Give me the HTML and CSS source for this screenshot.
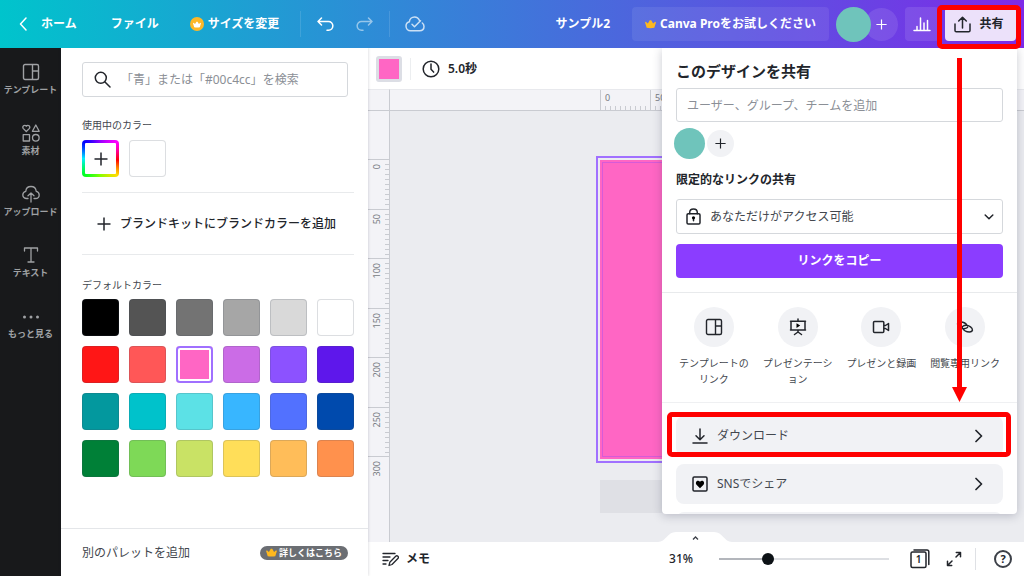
FILE: index.html
```html
<!DOCTYPE html>
<html lang="ja">
<head>
<meta charset="utf-8">
<meta name="viewport" content="width=device-width, initial-scale=1">
<title>サンプル2</title>
<link rel="stylesheet" href="styles.css">
</head>
<body>
<svg class="defs" aria-hidden="true">
  <symbol id="crown" viewBox="0 0 12 10"><path d="M1.800 9.200 0 3.200l.9-.7 2.200 1.900L5.200.8h1.600l2.100 3.600 2.200-1.900.9.7-1.800 6q-4.200.7-8.400 0z"/></symbol>
  <symbol id="layout" viewBox="0 0 18 18"><g fill="none" stroke="currentColor" stroke-width="1.400"><rect x="1.500" y="1.500" width="15" height="15" rx="1.500"/><path d="M10.500 1.500v15M10.500 8h6"/></g></symbol>
  <symbol id="plus" viewBox="0 0 14 14"><path d="M7 .5v13M.5 7h13" fill="none" stroke="currentColor" stroke-width="1.500"/></symbol>
  <symbol id="next" viewBox="0 0 8 14"><path d="m1 1.500 5.500 5.500L1 12.500" fill="none" stroke="currentColor" stroke-width="1.700" stroke-linecap="round" stroke-linejoin="round"/></symbol>
</svg>

<header class="topbar">
  <button class="top-btn home"><svg width="8" height="14" viewBox="0 0 8 14"><path d="M7 1 1.500 7 7 13" class="line"/></svg>ホーム</button>
  <button class="top-btn file">ファイル</button>
  <button class="top-btn resize"><span class="badge"><svg width="8" height="7"><use href="#crown"/></svg></span>サイズを変更</button>
  <span class="top-sep"></span>
  <button class="top-btn undo" aria-label="元に戻す"><svg width="17" height="15" viewBox="0 0 17 15"><path d="M4.500 1 1 4.500 4.500 8M1 4.500h10.500a4.300 4.300 0 0 1 0 8.700H10" class="line"/></svg></button>
  <button class="top-btn redo" aria-label="やり直し"><svg width="17" height="15" viewBox="0 0 17 15"><path d="M12.500 1 16 4.500 12.500 8M16 4.500H5.500a4.300 4.300 0 0 0 0 8.700H7" class="line"/></svg></button>
  <span class="top-sep"></span>
  <button class="top-btn cloud" aria-label="保存済み"><svg width="20" height="16" viewBox="0 0 20 16"><path d="M14.500 4.500C13.500 2.200 11.800 1 9.600 1 6.800 1 4.600 3 4.400 5.800 2.400 6.300 1 7.900 1 10c0 2.700 2 4.700 4.500 4.700h9c2.600 0 4.500-1.700 4.500-4.200 0-1.500-.6-2.700-1.700-3.500M7 8.200l2.500 2.500 6-6" class="line"/></svg></button>
  <span class="doc-name">サンプル2</span>
  <button class="top-btn pro"><svg class="gold" width="11" height="10"><use href="#crown"/></svg>Canva Proをお試しください</button>
  <span class="people"><span class="avatar"></span><button class="top-btn invite" aria-label="メンバーを追加"><svg width="11" height="11"><use href="#plus"/></svg></button></span>
  <button class="top-btn stats" aria-label="分析"><svg width="18" height="17" viewBox="0 0 18 17"><path d="M1 14.500h16M4 14.500v-4M7.500 14.500V2M11 14.500V7M14.500 14.500v-10" class="line"/></svg></button>
  <div class="share-wrap">
    <button class="top-btn share"><svg width="17" height="17" viewBox="0 0 17 17"><path d="M1 8v6.500q0 1.300 1.300 1.300h12.400q1.300 0 1.300-1.300V8M8.500 12V1.300M4.700 5l3.800-3.800L12.300 5" class="line"/></svg>共有</button>
    <span class="mark mark-share"></span>
  </div>
</header>

<div class="body">
  <nav class="rail">
    <a href="#"><svg width="18" height="18"><use href="#layout"/></svg>テンプレート</a>
    <a href="#"><svg width="18" height="18" viewBox="0 0 18 18"><path d="M4.300 7.500 1.400 4.600C-.2 2.800 2.400-.2 4.300 2.200 6.200-.2 8.800 2.800 7.200 4.600zM13.800 1l3.400 6.300h-6.800zM1.200 10.700h6.300V17H1.200z" class="line thin"/><circle cx="13.800" cy="13.800" r="3.300" class="line thin"/></svg>素材</a>
    <a href="#"><svg width="18" height="18" viewBox="0 0 18 18"><path d="M6 13.500H4.600C2.400 13.500.8 12 .8 10s1.300-3.400 3-3.700C4 3.500 6.200 1.500 9 1.500s4.900 2 5.200 4.800c1.800.3 3 1.800 3 3.700 0 2-1.600 3.500-3.800 3.500H12M9 17V8M6 10.800 9 7.900l3 2.900" class="line thin"/></svg>アップロード</a>
    <a href="#"><svg width="18" height="18" viewBox="0 0 18 18"><path d="M2.500 5V2h13v3M9 2v14M6 16h6" class="line thin"/></svg>テキスト</a>
    <a href="#"><svg width="18" height="18" viewBox="0 0 18 18"><g fill="currentColor"><circle cx="2.500" cy="10" r="1.500"/><circle cx="9" cy="10" r="1.500"/><circle cx="15.500" cy="10" r="1.500"/></g></svg>もっと見る</a>
  </nav>

  <aside class="panel">
    <div class="panel-main">
      <label class="search"><svg width="17" height="17" viewBox="0 0 17 17"><circle cx="6.800" cy="6.800" r="5.500" class="line"/><path d="m11 11 5 5" class="line"/></svg><input type="search" aria-label="カラーを検索" placeholder="「青」または「#00c4cc」を検索"></label>
      <h2 class="label">使用中のカラー</h2>
      <div class="swatches">
        <button class="swatch rainbow" aria-label="新しいカラーを追加"><svg width="14" height="14"><use href="#plus"/></svg></button>
        <button class="swatch" aria-label="白"></button>
      </div>
      <button class="brand"><svg width="14" height="14"><use href="#plus"/></svg>ブランドキットにブランドカラーを追加</button>
      <h2 class="label">デフォルトカラー</h2>
      <div class="swatches">
        <button class="swatch" style="background:#000000" aria-label="#000000"></button>
        <button class="swatch" style="background:#545454" aria-label="#545454"></button>
        <button class="swatch" style="background:#737373" aria-label="#737373"></button>
        <button class="swatch" style="background:#a6a6a6" aria-label="#a6a6a6"></button>
        <button class="swatch" style="background:#d9d9d9" aria-label="#d9d9d9"></button>
        <button class="swatch" style="background:#ffffff" aria-label="#ffffff"></button>
        <button class="swatch" style="background:#ff1616" aria-label="#ff1616"></button>
        <button class="swatch" style="background:#ff5757" aria-label="#ff5757"></button>
        <button class="swatch selected" style="background:#ff66c4" aria-label="#ff66c4"></button>
        <button class="swatch" style="background:#cb6ce6" aria-label="#cb6ce6"></button>
        <button class="swatch" style="background:#8c52ff" aria-label="#8c52ff"></button>
        <button class="swatch" style="background:#5e17eb" aria-label="#5e17eb"></button>
        <button class="swatch" style="background:#03989e" aria-label="#03989e"></button>
        <button class="swatch" style="background:#00c2cb" aria-label="#00c2cb"></button>
        <button class="swatch" style="background:#5ce1e6" aria-label="#5ce1e6"></button>
        <button class="swatch" style="background:#38b6ff" aria-label="#38b6ff"></button>
        <button class="swatch" style="background:#5271ff" aria-label="#5271ff"></button>
        <button class="swatch" style="background:#004aad" aria-label="#004aad"></button>
        <button class="swatch" style="background:#008037" aria-label="#008037"></button>
        <button class="swatch" style="background:#7ed957" aria-label="#7ed957"></button>
        <button class="swatch" style="background:#c9e265" aria-label="#c9e265"></button>
        <button class="swatch" style="background:#ffde59" aria-label="#ffde59"></button>
        <button class="swatch" style="background:#ffbd59" aria-label="#ffbd59"></button>
        <button class="swatch" style="background:#ff914d" aria-label="#ff914d"></button>
      </div>
    </div>
    <div class="panel-foot">別のパレットを追加<button class="pill"><svg class="gold" width="11" height="9"><use href="#crown"/></svg>詳しくはこちら</button></div>
  </aside>

  <main class="editor">
    <div class="toolbar">
      <button class="fill" aria-label="背景色"></button>
      <span class="tool-sep"></span>
      <button class="timing"><svg width="18" height="18" viewBox="0 0 18 18"><circle cx="9" cy="9" r="7.800" class="line"/><path d="M9 4v5.300l2.600 2.800" class="line"/></svg>5.0秒</button>
    </div>
    <div class="stage">
      <div class="corner"></div>
      <div class="ruler-x"><div class="marks-x"><span>0</span><span>50</span><span>100</span><span>150</span></div></div>
      <div class="ruler-y"><div class="marks-y"><div><span>0</span></div><div><span>50</span></div><div><span>100</span></div><div><span>150</span></div><div><span>200</span></div><div><span>250</span></div></div><div class="mark-end"><span>300</span></div></div>
      <div class="canvas">
        <div class="sheet"></div>
        <button class="add-page" aria-label="ページを追加"></button>
      </div>
      <button class="drawer" aria-label="ページを表示"><svg width="76" height="11" viewBox="0 0 76 11"><path d="M0 11C8 11 9 1 18 1h38c9 0 10 10 18 10z" fill="#fff"/><path d="m35 8.500 2.500-2.500L40 8.500" fill="none" stroke="#3c4048" stroke-width="1.300"/></svg></button>
    </div>
    <footer class="status">
      <button class="memo"><svg width="17" height="15" viewBox="0 0 17 15"><path d="M1 1.500h12M1 5h7M1 8.500h5M1 12h3M7 13.500l.8-3.200 5.900-6a1.500 1.500 0 0 1 2.200 2.200l-5.900 6z" class="line thin"/></svg>メモ</button>
      <span class="zoom">31%</span>
      <input class="slider" type="range" min="0" max="100" value="27" aria-label="ズーム">
      <button class="icon-btn" aria-label="ページ一覧"><svg width="20" height="20" viewBox="0 0 20 20"><rect x="1" y="3" width="15" height="15.500" rx="1.500" class="line"/><path d="M4 1h13q1.800 0 1.800 1.800V15.500" class="line"/><text x="8.500" y="14" text-anchor="middle" class="count">1</text></svg></button>
      <button class="icon-btn" aria-label="全画面表示"><svg width="16" height="16" viewBox="0 0 16 16"><path d="M10 6 14 2M10.300 1.500h4.200v4.200M6 10l-4 4M1.500 10.300v4.200h4.200" class="line"/></svg></button>
      <span class="status-sep"></span>
      <button class="help" aria-label="ヘルプ">?</button>
    </footer>
  </main>

  <section class="popover" aria-label="共有">
    <div class="pop-top">
      <h1>このデザインを共有</h1>
      <input class="invite-field" type="text" aria-label="共有相手" placeholder="ユーザー、グループ、チームを追加">
      <div class="members"><span class="avatar small"></span><button class="add-member" aria-label="メンバーを追加"><svg width="11" height="11"><use href="#plus"/></svg></button></div>
      <label class="access-label" for="access">限定的なリンクの共有</label>
      <div class="access">
        <svg width="15" height="17" viewBox="0 0 15 17"><rect x="1" y="5.800" width="13" height="10.200" rx="1.200" class="line"/><path d="M3.700 5.800V4.500q0-3.500 3.800-3.500t3.800 3.500v1.300" class="line"/><path d="M7.500 12.800V11" class="line"/><circle cx="7.500" cy="9.800" r="1.600"/></svg>
        <select id="access"><option>あなただけがアクセス可能</option></select>
        <svg width="10" height="6" viewBox="0 0 10 6"><path d="m1.200 1 3.800 3.800L8.800 1" class="line"/></svg>
      </div>
      <button class="copy">リンクをコピー</button>
    </div>
    <div class="actions">
      <button><span class="disc"><svg width="18" height="18"><use href="#layout"/></svg></span>テンプレートのリンク</button>
      <button><span class="disc"><svg width="18" height="18" viewBox="0 0 18 18"><path d="M9 1v2M1.500 3.200h15M2 3.200v8.800h14V3.200M1.500 12h15M9 12v2L5.500 16.500M9 14l3.500 2.500" class="line"/><path d="M7.500 5.300v4.600l3.700-2.300z"/></svg></span>プレゼンテーション</button>
      <button><span class="disc"><svg width="18" height="18" viewBox="0 0 18 18"><path d="M2.500 3.500h8.300q1 0 1 1v9q0 1-1 1H2.500q-1 0-1-1v-9q0-1 1-1zM12 7.500h1.500L16.500 5.500v7L13.500 10.500H12" class="line"/></svg></span>プレゼンと録画</button>
      <button><span class="disc"><svg width="18" height="18" viewBox="0 0 18 18"><path d="M11.500 9.500C9.500 11 6 11 3.500 9.200.5 7 1 4 4.500 4c3 0 6 2 7 4M6.500 8.500c2-1.500 5.500-1.500 8 .3 3 2.200 2.500 5.200-1 5.200-3 0-6-2-7-4" class="line"/></svg></span>閲覧専用リンク</button>
    </div>
    <div class="rows">
      <div class="row-wrap">
        <button class="row"><svg width="16" height="16" viewBox="0 0 16 16"><path d="M8 1v10.500M4 7.800l4 4 4-4M1 15h14" class="line"/></svg><span>ダウンロード</span><svg width="8" height="14"><use href="#next"/></svg></button>
        <span class="mark mark-row"></span>
      </div>
      <button class="row"><svg width="16" height="16" viewBox="0 0 16 16"><rect x="1" y="1" width="14" height="14" rx="1.200" class="line"/><path d="M8 12.300 4.500 8.800C2.500 6 5.800 3.200 8 5.700c2.200-2.500 5.500.3 3.500 3.100z"/></svg><span>SNSでシェア</span><svg width="8" height="14"><use href="#next"/></svg></button>
      <div class="row"></div>
    </div>
    <svg class="arrow" width="15" height="344" viewBox="0 0 15 344"><path d="M5 0h5v329h5l-7.500 15L0 329h5z"/></svg>
  </section>
</div>
</body>
</html>
```

FILE: styles.css
```css
* { box-sizing: border-box; }

body {
  margin: 0;
  min-height: 100vh;
  display: flex;
  flex-direction: column;
  font: 12px/16px "Noto Sans", "Noto Sans CJK JP", sans-serif;
  color: #22252b;
  background: #fff;
}

button, input, select { font: inherit; color: inherit; }
button { padding: 0; border: 0; background: none; cursor: pointer; }
svg { flex: none; display: block; }
.defs { position: absolute; width: 0; height: 0; }
.line { fill: none; stroke: currentColor; stroke-width: 1.5; stroke-linecap: round; stroke-linejoin: round; }
.thin { stroke-width: 1.3; }
.gold { fill: #fdb81e; }

/* Top bar */
.topbar {
  position: relative;
  z-index: 3;
  height: 48px;
  flex: none;
  display: flex;
  align-items: center;
  padding: 0 8px 0 19px;
  color: #fff;
  background: linear-gradient(90deg, #00c4cc, #7d2ae8);
}
.top-btn { display: flex; align-items: center; justify-content: center; font-weight: 700; white-space: nowrap; }
.home { gap: 14px; }
.file { margin-left: 34px; }
.resize { gap: 4px; margin-left: 31px; }
.badge { width: 14px; height: 14px; border-radius: 50%; background: #fdb827; display: grid; place-items: center; fill: #fff; }
.top-sep { width: 1px; height: 26px; margin: 0 15px 0 21px; background: rgba(255, 255, 255, .12); }
.undo { margin-left: 1px; }
.redo { margin-left: 22px; opacity: .5; }
.redo + .top-sep { margin-left: 16px; }
.cloud { opacity: .75; }
.doc-name { margin-left: auto; font-weight: 700; }
.pro { height: 34px; gap: 4px; margin-left: 22px; padding: 0 13px; border-radius: 4px; background: rgba(255, 255, 255, .08); }
.people { display: flex; align-items: center; margin-left: 7px; }
.avatar { position: relative; z-index: 1; width: 35px; height: 35px; border-radius: 50%; background: #6fc4bb; }
.invite { width: 33px; height: 33px; margin-left: -6px; border-radius: 50%; background: rgba(255, 255, 255, .1); }
.stats { width: 34px; height: 34px; margin-left: 7px; border-radius: 4px; background: rgba(255, 255, 255, .1); }
.share-wrap { position: relative; margin-left: 6px; }
.share { width: 71px; height: 34px; gap: 8px; padding-right: 3px; border-radius: 4px; color: #22252b; background: #ece1fa; }

/* Highlight frames and arrow */
.mark { position: absolute; border: 5px solid #f00; border-radius: 5px; pointer-events: none; }
.mark-share { inset: -2px -5px -8px -8px; }
.mark-row { inset: -4px -8px -1px -9px; }
.arrow { position: absolute; top: 10px; right: 50px; fill: #f00; pointer-events: none; }

.body { position: relative; flex: 1; display: flex; }

/* Left rail */
.rail { width: 61px; flex: none; padding-top: 15px; background: #18191b; }
.rail a {
  height: 61px;
  display: flex;
  flex-direction: column;
  align-items: center;
  gap: 3px;
  color: #9fa1a4;
  font-size: 9px;
  line-height: 12px;
  font-weight: 700;
  text-decoration: none;
  white-space: nowrap;
}

/* Colour panel */
.panel { position: relative; z-index: 1; width: 307px; flex: none; display: flex; flex-direction: column; background: #fff; box-shadow: 0 0 3px rgba(20, 24, 40, .2); }
.panel-main { flex: 1; padding: 14px 14px 0 21px; }
.search { display: flex; align-items: center; gap: 10px; height: 35px; margin-right: 6px; padding-left: 11px; border: 1px solid #d5d8dc; border-radius: 3px; }
.search input { flex: 1; min-width: 0; padding: 0; border: 0; outline: 0; background: none; }
::placeholder { color: #8b8f96; opacity: 1; }
.label { margin: 20px 0 7px; font-size: 10px; line-height: 16px; font-weight: 400; color: #43474e; }
.swatches { display: grid; grid-template-columns: repeat(6, 37px); gap: 10px; }
.swatch { height: 37px; border-radius: 4px; border: 1px solid rgba(60, 70, 90, .18); background: #fff border-box; }
.rainbow {
  display: grid;
  place-items: center;
  border: 3px solid transparent;
  background: linear-gradient(#fff, #fff) padding-box, conic-gradient(#90f, #f0f 45deg, #f00 95deg, #fd0 135deg, #8f0 180deg, #0f2 225deg, #0ef 270deg, #00f 315deg, #90f) border-box;
}
.selected { border: 0; box-shadow: inset 0 0 0 2px #a070ff, inset 0 0 0 4px #fff; }
.brand {
  width: 100%;
  height: 63px;
  margin-top: 15px;
  display: flex;
  align-items: center;
  justify-content: center;
  gap: 9px;
  padding-right: 3px;
  font-weight: 500;
  border: solid #e8eaec;
  border-width: 1px 0;
}
.brand + .label { margin-top: 22px; margin-bottom: 6px; }
.panel-foot { height: 48px; display: flex; align-items: center; justify-content: space-between; padding: 0 20px 0 21px; border-top: 1px solid #e4e6e9; color: #43474e; }
.pill { display: flex; align-items: center; gap: 2px; height: 14px; padding: 0 6px; border-radius: 7px; color: #fff; font-size: 9px; line-height: 14px; font-weight: 700; background: #6b6e73; }

/* Editor */
.editor { flex: 1; min-width: 0; display: flex; flex-direction: column; }
.toolbar { height: 41px; display: flex; align-items: center; padding-left: 8px; }
.fill { width: 26px; height: 26px; border: 3px solid #dcdee5; border-radius: 3px; background: #ff66c4; }
.tool-sep { width: 1px; height: 22px; margin: 0 11px 0 8px; background: #eceef0; }
.timing { display: flex; align-items: center; gap: 8px; font-weight: 600; }

.stage { position: relative; flex: 1; display: grid; grid-template: 22px 1fr / 22px 1fr; background: #ebecf0; }
.corner, .ruler-x, .ruler-y { background: #f3f3f7; border: 0 solid #c9cbd1; color: #777b82; font-size: 9px; line-height: 12px; }
.corner { border-width: 1px 1px 1px 0; border-top-color: #e8e9ed; }
.ruler-x { display: flex; justify-content: center; overflow: hidden; padding-right: 4px; border-bottom-width: 1px; border-top: 1px solid #e8e9ed; }
.marks-x { width: 210px; flex: none; display: grid; grid-template-columns: repeat(4, 50px); }
.marks-x span { padding: 2px 4px; border-left: 1px solid #c9cbd1; background: repeating-linear-gradient(90deg, transparent 0 4px, #c9cbd1 4px 5px) 0 100% / 100% 4px no-repeat; }
.ruler-y { display: flex; flex-direction: column; padding-top: 48px; border-right-width: 1px; }
.marks-y { height: 297px; display: grid; grid-template-rows: repeat(6, 1fr); }
.marks-y div { background: repeating-linear-gradient(transparent 0 4px, #c9cbd1 4px 5px) 100% 0 / 4px 100% no-repeat; }
.marks-y div, .mark-end { border-top: 1px solid #c9cbd1; padding: 4px 3px; }
.ruler-y span { display: block; writing-mode: vertical-rl; transform: rotate(180deg); text-align: right; }
.canvas { display: flex; flex-direction: column; align-items: center; gap: 21px; padding: 49px 4px 29px 0; }
.sheet { width: 210px; height: 299px; background: #ff66c4; outline: 2px solid #a070ff; outline-offset: 2px; box-shadow: inset 0 0 0 2px #ff66c4, inset 0 0 0 3px #d65bd8; }
.add-page { width: 210px; height: 33px; background: #dfe0e5; }
.drawer { position: absolute; bottom: 0; left: 290px; }

.status { height: 34px; display: flex; align-items: center; padding: 0 12px 0 14px; }
.memo { display: flex; align-items: center; gap: 7px; margin-right: auto; font-weight: 700; }
.zoom { font-weight: 500; margin-right: 26px; }
.slider { appearance: none; width: 170px; height: 12px; margin: 0 21px 0 0; background: linear-gradient(90deg, #b3b6bc 28%, #dddfe3 28%) center / 100% 2px no-repeat; }
.slider::-webkit-slider-thumb { appearance: none; width: 12px; height: 12px; border-radius: 50%; background: #0d1216; }
.slider::-moz-range-thumb { width: 12px; height: 12px; border: 0; border-radius: 50%; background: #0d1216; }
.icon-btn + .icon-btn { margin: 0 13px 0 16px; }
.count { font-size: 10px; font-weight: 600; fill: currentColor; }
.status-sep { width: 1px; height: 22px; margin-right: 18px; background: #dfe1e5; }
.help { width: 18px; height: 18px; border: 2px solid #3c4048; border-radius: 50%; font-size: 11px; line-height: 14px; font-weight: 700; }

/* Share popover */
.popover {
  position: absolute;
  z-index: 2;
  top: 0;
  right: 7px;
  width: 355px;
  height: 466px;
  overflow: hidden;
  background: #fff;
  border-radius: 0 0 4px 4px;
  box-shadow: 0 2px 10px rgba(40, 45, 70, .25);
}
.pop-top { display: flex; flex-direction: column; padding: 12px 14px 14px; border-bottom: 1px solid #e8eaec; }
h1 { margin: 0; font-size: 15px; line-height: 22px; font-weight: 700; }
.invite-field { height: 34px; margin-top: 6px; padding: 0 10px; border: 1px solid #d5d8dc; border-radius: 3px; background: none; }
.members { display: flex; align-items: center; gap: 2px; margin: 6px 0 0 -2px; height: 31px; }
.small { width: 31px; height: 31px; }
.add-member { width: 27px; height: 27px; border-radius: 50%; display: grid; place-items: center; background: #f1f2f5; }
.access-label { margin-top: 13px; font-weight: 700; }
.access { display: flex; align-items: center; height: 35px; margin-top: 11px; padding: 0 8px 0 9px; border: 1px solid #d5d8dc; border-radius: 3px; }
.access select { appearance: none; flex: 1; min-width: 0; margin-left: 9px; padding: 0; border: 0; background: none; color: #43474e; }
.copy { height: 34px; margin-top: 10px; border-radius: 4px; color: #fff; font-weight: 700; background: #8b3dff; }
.actions { display: grid; grid-template-columns: repeat(4, 1fr); height: 110px; padding: 14px 10px 0; border-bottom: 1px solid #eff0f2; }
.actions button { display: flex; flex-direction: column; align-items: center; gap: 8px; padding: 0 6px; font-size: 10px; line-height: 16px; color: #43474e; }
.disc { width: 40px; height: 40px; border-radius: 50%; display: grid; place-items: center; background: #f1f2f5; color: #22252b; }
.rows { display: flex; flex-direction: column; gap: 8px; padding: 13px 14px; }
.row-wrap { position: relative; }
.row { width: 100%; height: 40px; flex: none; display: flex; align-items: center; gap: 9px; padding: 0 20px 0 16px; border-radius: 8px; background: #f1f2f5; text-align: left; }
.row span { flex: 1; color: #43474e; }
```
